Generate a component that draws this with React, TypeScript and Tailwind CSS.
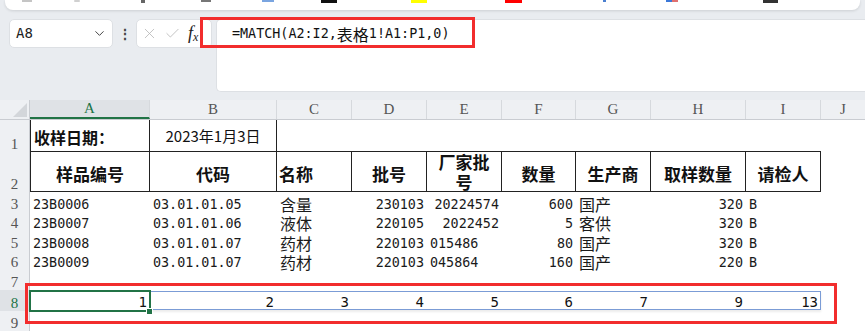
import React from "react";
import { ChevronDown, X, Check } from "lucide-react";

const MONO = "font-['DejaVu_Sans_Mono',monospace]";
const CJK = "font-['Noto_Sans_CJK_SC',sans-serif]";
const SERIF = "font-['Liberation_Serif',serif]";

const W = [
  "w-[120px]",
  "w-[127px]",
  "w-[75px]",
  "w-[75px]",
  "w-[75px]",
  "w-[74px]",
  "w-[75px]",
  "w-[95px]",
  "w-[75px]",
];
const LETTERS = ["A", "B", "C", "D", "E", "F", "G", "H", "I"];

type C = { t: string; r?: boolean; cjk?: boolean };
const DATA: C[][] = [
  [
    { t: "23B0006" },
    { t: "03.01.01.05" },
    { t: "含量", cjk: true },
    { t: "230103", r: true },
    { t: "20224574", r: true },
    { t: "600", r: true },
    { t: "国产", cjk: true },
    { t: "320", r: true },
    { t: "B" },
  ],
  [
    { t: "23B0007" },
    { t: "03.01.01.06" },
    { t: "液体", cjk: true },
    { t: "220105", r: true },
    { t: "2022452", r: true },
    { t: "5", r: true },
    { t: "客供", cjk: true },
    { t: "320", r: true },
    { t: "B" },
  ],
  [
    { t: "23B0008" },
    { t: "03.01.01.07" },
    { t: "药材", cjk: true },
    { t: "220103", r: true },
    { t: "015486" },
    { t: "80", r: true },
    { t: "国产", cjk: true },
    { t: "320", r: true },
    { t: "B" },
  ],
  [
    { t: "23B0009" },
    { t: "03.01.01.07" },
    { t: "药材", cjk: true },
    { t: "220103", r: true },
    { t: "045864" },
    { t: "160", r: true },
    { t: "国产", cjk: true },
    { t: "220", r: true },
    { t: "B" },
  ],
];
const ROW8 = ["1", "2", "3", "4", "5", "6", "7", "9", "13"];

function RowHead({ n, active = false }: { n: number; active?: boolean }) {
  return (
    <div
      className={`w-[30px] shrink-0 h-full flex items-end justify-center border-r border-[#c9ccd1] ${SERIF} text-[15px] leading-[15px] ${
        active ? "bg-[#dfe2e6] text-[#217346]" : "bg-[#eef0f3] text-[#555]"
      }`}
    >
      {n}
    </div>
  );
}

export default function App() {
  return (
    <div className="w-[865px] h-[331px] overflow-hidden bg-[#e9ecf0] relative">
      {/* toolbar card (cut off) */}
      <div className="mx-[5px] h-[10px] bg-white rounded-b-[8px] shadow-[0_1px_3px_rgba(0,0,0,0.12)] flex items-start">
        <div className="ml-[17px] w-[10px] h-[2px] bg-[#c5c5c5]" />
        <div className="ml-[42px] w-[6px] h-[2px] bg-[#d0d0d0] rounded-full" />
        <div className="ml-[61px] w-[4px] h-[3px] bg-[#666]" />
        <div className="ml-[56px] w-[10px] h-[2px] bg-[#777]" />
        <div className="ml-[51px] w-[12px] h-[2px] bg-[#7aa5e0]" />
        <div className="ml-[47px] w-[16px] h-[3px] bg-[#111]" />
        <div className="ml-[74px] w-[16px] h-[3px] bg-[#ffff00]" />
        <div className="ml-[78px] w-[17px] h-[3px] bg-[#ff0000]" />
        <div className="ml-[81px] w-[3px] h-[2px] bg-[#4a7fd0]" />
        <div className="ml-[60px] w-[6px] h-[2px] bg-[#3b78d8]" />
        <div className="w-[6px] h-[2px] bg-[#e07070]" />
        <div className="ml-[85px] w-[15px] h-[3px] bg-[#333]" />
      </div>

      {/* formula bar */}
      <div className="flex items-start mt-[9px] h-[73px]">
        <div className="ml-[9px] w-[104px] h-[29px] bg-white rounded-[5px] border border-[#dde0e4] flex items-center justify-between pl-[6px] pr-[5px]">
          <span className={`${MONO} text-[14px] text-[#222]`}>A8</span>
          <ChevronDown size={15} strokeWidth={1.6} className="text-[#444]" />
        </div>
        <div className="w-[23px] h-[29px] flex items-center justify-center text-[#444] text-[14px] font-bold leading-none">
          ⋮
        </div>
        <div className="w-[76px] h-[29px] bg-white rounded-[5px] border border-[#dde0e4] flex items-center pl-[4px]">
          <X size={17} strokeWidth={1.1} className="text-[#b3b3b3]" />
          <Check size={17} strokeWidth={1.1} className="text-[#b3b3b3] ml-[6px]" />
          <span className={`${SERIF} italic text-[18px] text-[#222] ml-[7px] leading-none`}>
            f<span className="text-[12px] align-[-2px]">x</span>
          </span>
        </div>
        <div className="ml-[4px] flex-1 h-[73px] bg-white rounded-l-[5px] border border-r-0 border-[#dde0e4] pl-[15px]">
          <div className={`h-[27px] flex items-center ${MONO} text-[13.4px] text-[#111] leading-none whitespace-nowrap`}>
            =MATCH(A2:I2,<span className={`${CJK} text-[16px] leading-none`}>表格</span>1!A1:P1,0)
          </div>
        </div>
      </div>

      {/* sheet */}
      <div className="mt-[8px] bg-white">
        {/* column headers */}
        <div className="flex h-[20px] bg-[#eef0f3] border-b border-[#c9ccd1]">
          <div className="w-[30px] shrink-0 border-r border-[#c9ccd1] flex items-end justify-end pr-[2px] pb-[2px]">
            <svg width="14" height="14" viewBox="0 0 14 14">
              <polygon points="14,0 14,14 0,14" fill="#d3d6da" />
            </svg>
          </div>
          {LETTERS.map((l, i) => (
            <div
              key={l}
              className={`${W[i]} shrink-0 flex items-center justify-center border-r border-[#d6d9dd] ${SERIF} text-[15px] leading-none ${
                i === 0
                  ? "bg-[#dfe2e6] text-[#217346] border-b-2 border-b-[#217346]"
                  : "text-[#555]"
              }`}
            >
              {l}
            </div>
          ))}
          <div className={`flex-1 flex items-center justify-center ${SERIF} text-[15px] text-[#555] leading-none`}>
            J
          </div>
        </div>

        {/* row 1 */}
        <div className="flex h-[32px]">
          <RowHead n={1} />
          <div className={`${W[0]} shrink-0 border-l border-r border-b border-[#222] flex items-center pl-[3px] pt-[2px] ${CJK} font-bold text-[16px] text-[#111]`}>
            收样日期：
          </div>
          <div className={`${W[1]} shrink-0 border-r border-b border-[#222] flex items-center justify-center pt-[2px] ${CJK} text-[15px] text-[#111]`}>
            2023年1月3日
          </div>
          <div className="w-[544px] shrink-0 border-b border-[#222]" />
        </div>

        {/* row 2 */}
        <div className="flex h-[40px]">
          <RowHead n={2} />
          {["样品编号", "代码", "名称", "批号", "E", "数量", "生产商", "取样数量", "请检人"].map((t, i) => (
            <div
              key={i}
              className={`${W[i]} shrink-0 h-full overflow-hidden border-r border-b border-[#222] ${i === 0 ? "border-l" : ""} flex ${
                i === 2 ? "justify-start pl-[2px]" : "justify-center"
              } ${i === 4 ? "items-start" : "items-center pt-[4px]"} ${CJK} font-bold text-[17px] text-[#111]`}
            >
              {i === 4 ? (
                <div className="text-center leading-[20px]">
                  厂家批
                  <br />号
                </div>
              ) : (
                t
              )}
            </div>
          ))}
        </div>

        {/* rows 3-6 */}
        {DATA.map((row, ri) => (
          <div key={ri} className={`flex ${ri % 2 === 0 ? "h-[20px]" : "h-[19px]"}`}>
            <RowHead n={ri + 3} />
            {row.map((c, i) => (
              <div
                key={i}
                className={`${W[i]} shrink-0 h-full flex items-end whitespace-nowrap ${
                  c.r ? "justify-end pr-[3px]" : "justify-start pl-[3px]"
                } ${c.cjk ? `${CJK} text-[16px] leading-[16px]` : `${MONO} text-[13.4px] leading-[15px]`} text-[#1a1a1a]`}
              >
                {c.t}
              </div>
            ))}
          </div>
        ))}

        {/* row 7 */}
        <div className="flex h-[20px]">
          <RowHead n={7} />
        </div>

        {/* row 8 */}
        <div className="flex h-[21px] relative">
          <RowHead n={8} active />
          {ROW8.map((t, i) => (
            <div
              key={i}
              className={`${W[i]} shrink-0 h-full flex items-end justify-end pr-[3px] ${MONO} text-[14px] leading-[17px] text-[#111]`}
            >
              {t}
            </div>
          ))}
          {/* blue range selection B8:I8 */}
          <div className="absolute left-[150px] top-[1px] w-[671px] h-[19px] border border-[#7b9cd6] shadow-[0_2px_2px_rgba(0,0,0,0.08)] pointer-events-none" />
          {/* active cell A8 */}
          <div className="absolute left-[29px] top-0 w-[122px] h-[22px] border-2 border-[#217346] pointer-events-none" />
          <div className="absolute left-[146px] top-[18px] w-[7px] h-[7px] bg-[#217346] border border-white" />
        </div>

        {/* row 9 */}
        <div className="flex h-[20px]">
          <RowHead n={9} />
        </div>
      </div>

      {/* red annotation boxes */}
      <div className="absolute left-[200px] top-[17px] w-[275px] h-[31px] border-[3px] border-[#f22d2d] pointer-events-none" />
      <div className="absolute left-[25px] top-[283px] w-[812px] h-[41px] border-[3px] border-[#f22d2d] pointer-events-none" />
    </div>
  );
}
